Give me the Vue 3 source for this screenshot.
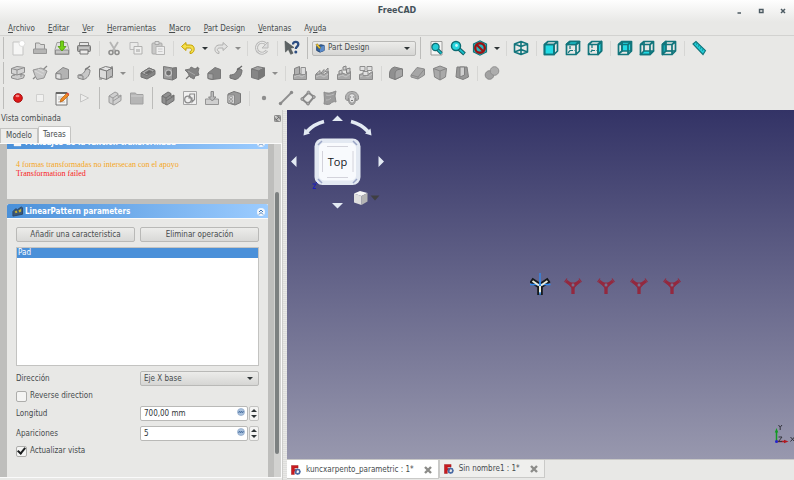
<script setup>
import { ref } from 'vue'

const menus = [
  ['', 'A', 'rchivo'],
  ['', 'E', 'ditar'],
  ['', 'V', 'er'],
  ['', 'H', 'erramientas'],
  ['', 'M', 'acro'],
  ['', 'P', 'art Design'],
  ['', 'V', 'entanas'],
  ['Ay', 'u', 'da']
]

const cube = (extra) =>
  `<g fill="none" stroke="#12757c" stroke-width="1.700" stroke-linejoin="round">${extra}<path d="M1.500 4.500h9.500v10H1.500zM1.500 4.500L5 1.500h9.500L11 4.500M14.500 1.500v9.500L11 14.500"/></g>`
const isoBox = (a, b, c, s = '#858585') =>
  `<g stroke="${s}" stroke-width="1" stroke-linejoin="round"><path fill="${a}" d="M1.500 4l6-2.500 7 1.500-6 3z"/><path fill="${b}" d="M1.500 4l7 2v8.500l-7-2z"/><path fill="${c}" d="M8.500 6l6-3v8l-6 3.500z"/></g>`
const ground = '<path d="M1.500 9.500l5-1.500L10 9.500l4.500-3v8h-13z" fill="#a9a9a9" stroke="#8a8a8a"/><path d="M2 12l4-2 4 2 4-3" fill="none" stroke="#c4c4c4"/>'

const icons = {
  new: '<path d="M3 2h7l3 3v10H3z" fill="#f6f6f5" stroke="#c4c4c3"/><circle cx="12" cy="3.500" r="3" fill="#fff" stroke="#dededd"/>',
  open: '<path d="M3.500 3h4l1 1.500h4V12h-9z" fill="#d8d8d7" stroke="#929291"/><path d="M1.500 9h13v4.500h-13z" fill="#b5b5b4" stroke="#979796"/>',
  save: '<path d="M3 2.500h10l2 7v5H1v-5z" fill="#e0e0df" stroke="#a0a09f"/><path d="M1.500 10h13v4h-13z" fill="#c5c5c4" stroke="#8c8c8b"/><path d="M6.500 1h3v5.500H12L8 11 4 6.500h2.500z" fill="#73d216" stroke="#4e9a06" stroke-width=".8"/>',
  print: '<path d="M3.500 2.500h9v5h-9z" fill="#e6e6e5" stroke="#858584"/><rect x="1.500" y="5.500" width="13" height="6" rx="1" fill="#a6a6a5" stroke="#777776"/><path d="M4 10h8v4H4z" fill="#ecebea" stroke="#777776"/><path d="M3 8h10" stroke="#e3e3e2"/>',
  cut: '<path d="M4 2l5.500 9M12 2L6.500 11" stroke="#b5b5b4" stroke-width="1.800"/><circle cx="5" cy="12.500" r="2" fill="none" stroke="#8e8e8d" stroke-width="1.600"/><circle cx="11" cy="12.500" r="2" fill="none" stroke="#8e8e8d" stroke-width="1.600"/>',
  copy: '<path d="M2 2.500h8v7H2z" fill="#eaeae9" stroke="#bababa"/><path d="M6 6.500h8v7.500H6z" fill="#efefee" stroke="#b0b0af"/><path d="M8 9h4v3H8z" fill="#c6c6c5"/>',
  paste: '<rect x="2" y="3" width="10" height="11" rx="1" fill="#c9c9c8" stroke="#a9a9a8"/><path d="M5 1.500h4v3H5z" fill="#ddd" stroke="#a9a9a8"/><path d="M6 6.500h8.500v8H6z" fill="#eee" stroke="#b5b5b4"/><path d="M8 9h4.500M8 11.500h4.500" stroke="#ccc"/>',
  undo: '<path d="M1.500 6.500L6 2.500v2.500h4.500c5 0 5 8.500-.5 8.500v-2c2.500-.5 2-3.500-.5-3.500H6v2.500z" fill="#f4df4c" stroke="#c4a000" stroke-linejoin="round"/>',
  redo: '<path d="M14.500 6.500L10 2.500v2.500H6.500c-6 0-6 8.500-.5 8.500v-2C3.500 11 4 8 6.500 8H10v2.500z" fill="#e2e2e1" stroke="#b0b0af" stroke-linejoin="round"/>',
  refresh: '<path d="M12.800 10.500A5.500 5.500 0 1 1 12 4" fill="none" stroke="#b9b9b8" stroke-width="3"/><path d="M12.800 10.500A5.500 5.500 0 1 1 12 4" fill="none" stroke="#eee" stroke-width="1"/><path d="M14 2v6H8z" fill="#ddd" stroke="#b9b9b8"/>',
  whats: '<path d="M1 1l9 6.500-3.500.7 2.500 5-2.300 1.100-2.400-5L1.500 12z" fill="#5d6364" stroke="#454b4c" stroke-width=".6"/><path d="M9 4.500C9 .8 14.500 1 14.300 4.400 14.200 6.500 11.800 6.800 11.800 9" fill="none" stroke="#2c4d82" stroke-width="2.300"/><circle cx="11.800" cy="12" r="1.500" fill="#2c4d82"/>',
  fitall: '<path d="M3 1.500h11v13.500H3z" fill="#f5f5f4" stroke="#9b9b9a"/><path d="M9.500 9.500l4 4" stroke="#0d5d63" stroke-width="3.200"/><path d="M9.500 9.500l4 4" stroke="#19bfc9" stroke-width="1.600"/><circle cx="7.500" cy="7" r="3.600" fill="#22ccd6" stroke="#0d6c73" stroke-width="1.200"/>',
  zoomsel: '<path d="M8.500 8.500l6 5.500" stroke="#0d5d63" stroke-width="3.800"/><path d="M8.500 8.500l5.500 5" stroke="#19bfc9" stroke-width="1.800"/><circle cx="6" cy="6" r="4.500" fill="#27d5df" stroke="#0d6c73" stroke-width="1.500"/><circle cx="6.500" cy="5.500" r="1.400" fill="#c8f8fa"/>',
  drawstyle: '<path d="M1.500 4L8 .800 14.500 4v8L8 15.200 1.500 12z" fill="#29b9c0" stroke="#12757c" stroke-width="1.200"/><circle cx="8" cy="8" r="4.800" fill="none" stroke="#9b1212" stroke-width="2.400"/><path d="M4.500 4.500l7 7" stroke="#9b1212" stroke-width="2.200"/>',
  iso: '<g fill="none" stroke="#12757c" stroke-width="1.600" stroke-linejoin="round"><path d="M1.500 4L8 1.500 14.500 4v8L8 14.500 1.500 12zM1.500 4L8 6.500 14.500 4M8 6.500v8M8 1.500v4M1.500 12L8 9.500l6.500 2.500"/></g>',
  front: cube('<path d="M1.500 4.500h9.500v10H1.500z" fill="#22dbe5"/>'),
  top: cube('<path d="M1.500 4.500L5 1.500h9.500L11 4.500z" fill="#22dbe5"/><path d="M5 6v4.500L2 14M5 10.500h5" stroke-width="1.200" stroke-dasharray="3 1.500"/>'),
  right: cube('<path d="M11 4.500l3.500-3v9.500L11 14.500z" fill="#22dbe5"/><path d="M5 5v5.500L2 14M5 10.500h5" stroke-width="1.200" stroke-dasharray="3 1.500"/>'),
  rear: cube('<path d="M5 2h9v9H5z" fill="#22dbe5"/><path d="M5 2v9l-3.500 3"/>'),
  bottom: cube('<path d="M1.500 14.500L5 11h9.500L11 14.500z" fill="#22dbe5"/><path d="M5 2v9"/>'),
  left: cube('<path d="M1.500 4.500L5 1.500V11l-3.500 3.500z" fill="#14a9b2"/><path d="M5 11h9"/>'),
  measure: '<path d="M2 4l3-2.500 9.500 9L12 14.500z" fill="#22cdd7" stroke="#12757c" stroke-width="1.100"/><path d="M5 4.500l1.300-1.200M7 6.500l1.300-1.200M9 8.500l1.300-1.200M11 10.500l1.300-1.200" stroke="#12757c"/>',
  pad: '<g stroke="#8d8d8d" fill="#ccc" stroke-linejoin="round"><path d="M1.500 11l5.500-2 7.500 1-1 3-6 1.500-6-1.500z"/><path d="M1.500 3.500l5.500-2 7.500 1v5L7 10l-5.500-1.500z" fill="#d4d4d4"/><path d="M1.500 3.500l5.500 1.500 7.500-2.500M7 5v5M4 9v2M11 9v3"/></g>',
  revolve: '<path d="M1 14L15 1" stroke="#888" stroke-width="1.200"/><path d="M1 5l8-2 6 3-3 7-7 1.500-2-4z" fill="#c5c5c5" stroke="#949494"/><path d="M3 6l8 4M6 4l6 3" stroke="#dadada"/>',
  loft: '<path d="M2 8l7-5.500 5.500 2v9l-8.500 1-4-1z" fill="#b3b3b3" stroke="#858585"/><path d="M2 8.500l5 .5v5.500l-5-1z" fill="#e2e2e2" stroke="#858585"/>',
  sweep: '<path d="M2 10c5 0 7-3 8-7l4 2c0 5-3 9-7 9.500L2 13z" fill="#c7c7c7" stroke="#858585"/><path d="M9 5l5-4" stroke="#777" stroke-width="1.300"/><path d="M3 10l4 1v3" fill="none" stroke="#858585"/>',
  prim: isoBox('#e4e4e4', '#dadada', '#b9b9b9', '#7c7c7c') + '<path d="M14 1v2M1 14h3M12 12h3" stroke="#777"/>',
  pocket: '<g stroke="#707070" stroke-linejoin="round"><path d="M1 8l8-5 6 2.500v4L7 14l-6-2z" fill="#858585"/><path d="M1 8l8-5 6 2.500-8 5z" fill="#a9a9a9"/><path d="M5 8l4-2.500 3 1L8 9z" fill="#666"/></g>',
  hole: '<path d="M1.500 1.500l9 1.500v12l-9-1.500z" fill="#9c9c9c" stroke="#777"/><path d="M10.500 3l4-.500v10.500l-4 2z" fill="#808080" stroke="#777"/><circle cx="6.500" cy="8" r="3" fill="#6e6e6e" stroke="#c6c6c6" stroke-width="1.200"/>',
  groove: '<path d="M2 14L14 2" stroke="#777" stroke-width="1.300"/><path d="M1 5l5-1 1-2 4 2 4-1-1 4 1 3-4 1-1 3-4-2-2-4z" fill="#848484" stroke="#777"/><path d="M4 6l7 4" stroke="#a5a5a5"/>',
  subloft: '<path d="M2 8l7-5.500 5.500 2v9l-8.500 1-4-1z" fill="#858585" stroke="#787878"/><path d="M2 8.500l5 .5v5.500l-5-1z" fill="#a5a5a5" stroke="#787878"/>',
  subsweep: '<path d="M2 10c5 0 7-3 8-7l4 2c0 5-3 9-7 9.500L2 13z" fill="#878787" stroke="#707070"/><path d="M9 5l5-4" stroke="#666" stroke-width="1.300"/>',
  subprim: isoBox('#a2a2a2', '#868686', '#777777', '#777'),
  mirror: ground + '<path d="M2.500 3.500l5-2V9l-5 1z" fill="#b0b0b0" stroke="#808080"/><path d="M9 2.500h4.500v7H9z" fill="#dcdcdc" stroke="#909090"/>',
  linpat: ground + '<path d="M2 9l4-3.500V9zM7 8l3-3.500V8zM11 6.500l3-3.500v4z" fill="#d5d5d5" stroke="#858585"/>',
  polpat: ground + '<path d="M3 9V6l3-1v4zM7 5V2l3-1v4zM10.500 8V4l3.500-1v5z" fill="#cfcfcf" stroke="#848484"/>',
  multi: ground + '<path d="M2 1.500h5v4H2zM9 1.500h5v4H9zM5 6.500h5v4H5z" fill="#e0e0e0" stroke="#8f8f8f"/>',
  fillet: '<g stroke="#7d7d7d" stroke-linejoin="round"><path d="M1.500 9c0-4 2-6 5-7l8 2v7L7 14.500l-5.500-2z" fill="#909090"/><path d="M7 9c0-3 2-5 7.500-5v7L7 14.500z" fill="#a6a6a6"/></g>',
  chamfer: '<g stroke="#8b8b8b" stroke-linejoin="round"><path d="M1 10l6-7.500 7.500 1.500v6L8 14l-7-2z" fill="#a6a6a6"/><path d="M1 10l7 2 6.500-8M8 12v2" fill="none"/></g>',
  draft: '<g stroke="#848484" stroke-linejoin="round"><path d="M1.500 3.500L8 1l6.500 2.500-1 8.500L8 15 2.500 12z" fill="#a9a9a9"/><path d="M1.500 3.500L8 6l6.500-2.500M8 6v9" fill="none"/></g>',
  thick: '<path d="M3 2h10l1.500 10L9 14.500 2 12z" fill="#999" stroke="#808080"/><path d="M6 2h4.500v8L6 12z" fill="#d0d0d0" stroke="#808080"/>',
  bool: '<circle cx="5.500" cy="10" r="4.300" fill="#a2a2a2" stroke="#898989"/><circle cx="10.500" cy="6" r="4.300" fill="#adadad" stroke="#909090"/>',
  rec: '<circle cx="8" cy="8" r="4.300" fill="#df1818" stroke="#a81010"/><ellipse cx="7.500" cy="6" rx="2" ry="1.200" fill="#f48080"/>',
  stop: '<path d="M4.500 4.500h7v7h-7z" fill="#f1f1f0" stroke="#d0d0cf"/>',
  macro: '<path d="M2 2.500h11V15H2z" fill="#f5f5f4" stroke="#737372"/><path d="M2 3h11" stroke="#666" stroke-width="2"/><path d="M4 7h6M4 9h4M4 12h7" stroke="#bbb"/><path d="M6 12l1-3 6-6 2 2-6 6z" fill="#f08a24" stroke="#b35c10" stroke-width=".7"/><path d="M12.500 3.500l1.200-1 1.600 1.600-1 1.200z" fill="#dd4444"/>',
  play: '<path d="M4.500 4l8 4-8 4z" fill="#ededec" stroke="#c6c6c5"/>',
  body: '<g stroke="#9a9a9a" fill="#cfcfcf" stroke-linejoin="round"><path d="M2 6l6-4 3 1.500v3l3-1.500v5.500L7 15l-5-2.500z"/><path d="M2 6l4 2 5-3.500M6 8v3l8-5M6 11v4" fill="none"/></g>',
  group: '<path d="M1.500 3h5l1 1.500h6.500V14h-12.500z" fill="#b5b5b5" stroke="#a0a0a0"/><path d="M2 6h12" stroke="#d0d0d0"/>',
  body2: '<g stroke="#6f6f6f" fill="#909090" stroke-linejoin="round"><path d="M2 6l6-4 3 1.500v3l3-1.500v5.500L7 15l-5-2.500z"/><path d="M2 6l4 2 5-3.500M6 8v3l8-5M6 11v4" fill="none"/></g>',
  sketch: '<path d="M1.500 1.500h13v13h-13z" fill="#f0f0f0" stroke="#a5a5a5"/><circle cx="6" cy="9.500" r="3.300" fill="none" stroke="#8b8b8b" stroke-width="1.300"/><path d="M8 4h4.500v5.500L10 12V8H7z" fill="none" stroke="#8b8b8b" stroke-width="1.200"/>',
  import: '<path d="M1.500 9h13v5.500h-13z" fill="#cfcfcf" stroke="#949494"/><path d="M7 1.500h2.500V7H12l-3.700 4L4.500 7H7z" fill="#bbb" stroke="#8a8a8a"/>',
  binder: '<path d="M2 4l6-2.500 6.500 2v9L9 15l-7-2z" fill="#999" stroke="#777"/><path d="M2 5h6.500v9L2 13z" fill="#d5d5d5" stroke="#888"/><circle cx="5" cy="7.500" r="1.500" fill="none" stroke="#999"/><circle cx="5" cy="11" r="1.500" fill="none" stroke="#999"/>',
  point: '<circle cx="8" cy="8" r="2.200" fill="#8e8e8e"/>',
  line: '<path d="M2.500 13.500l11-11" stroke="#8f8f8f" stroke-width="1.800"/><circle cx="2.500" cy="13.500" r="1.700" fill="#8a8a8a"/><circle cx="13.500" cy="2.500" r="1.700" fill="#8a8a8a"/>',
  plane: '<path d="M2 9l6.500-6.500L14 7l-6 7z" fill="none" stroke="#8a8a8a" stroke-width="2"/><g fill="#aaa" stroke="#777" stroke-width=".6"><circle cx="2.300" cy="9" r="1.500"/><circle cx="8.500" cy="2.500" r="1.500"/><circle cx="13.800" cy="7" r="1.500"/><circle cx="8" cy="13.500" r="1.500"/></g>',
  lcs: '<path d="M2 2c4 2 7 1 12-1l-1 5 1 6c-2-1-4 0-6 2-2 1-4 0-6 0 1-4 0-8 0-12z" fill="#9c9c9c" stroke="#8c8c8c"/><path d="M4 5c3 1 5 0 8-1M4 10c2 0 3 0 5-2" fill="none" stroke="#bbb"/>',
  shape: '<path d="M1.500 9C1 4 4 1.500 8 1.500S15 4 14.500 9l-2 2-1-3c0 5-1 6.500-3.500 6.500S4.500 13 4.500 8l-1 3z" fill="#b3b3b3" stroke="#8f8f8f"/><path d="M5 6c0-3 6-3 6 0 0 5-1 7-3 7s-3-2-3-7z" fill="#e3e3e3" stroke="#8f8f8f"/><path d="M6.500 6.500v1M9.500 6.500v1M7 10.500h2" stroke="#777" stroke-width="1.200"/>'
}

const item = (icon, label, disabled = true) => ({ icon, label, disabled })
const arrow = (disabled = true) => ({ arrow: true, disabled, label: 'Más opciones' })
const sep = { sep: true }
const bar = { bar: true }

const rows = [
  {
    name: 'main',
    items: [
      item('new', 'Nuevo'), item('open', 'Abrir'), item('save', 'Guardar', false), item('print', 'Imprimir', false), sep,
      item('cut', 'Cortar'), item('copy', 'Copiar'), item('paste', 'Pegar'), sep,
      item('undo', 'Deshacer', false), arrow(false), item('redo', 'Rehacer'), arrow(), sep,
      item('refresh', 'Actualizar'), sep, item('whats', '¿Qué es esto?', false), bar,
      { workbench: true }, bar,
      item('fitall', 'Ajustar todo', false), item('zoomsel', 'Ajustar selección', false), item('drawstyle', 'Estilo de dibujo', false), arrow(false), sep,
      item('iso', 'Isométrica', false), sep,
      item('front', 'Frontal', false), item('top', 'Planta', false), item('right', 'Derecha', false), sep,
      item('rear', 'Posterior', false), item('bottom', 'Inferior', false), item('left', 'Izquierda', false), sep,
      item('measure', 'Medir', false)
    ]
  },
  {
    name: 'features',
    items: [
      item('pad', 'Pad'), item('revolve', 'Revolución'), item('loft', 'Loft'), item('sweep', 'Barrido'), item('prim', 'Primitiva'), arrow(), sep,
      item('pocket', 'Vaciado'), item('hole', 'Agujero'), item('groove', 'Ranura'), item('subloft', 'Loft sustractivo'), item('subsweep', 'Barrido sustractivo'), item('subprim', 'Primitiva sustractiva'), arrow(), sep,
      item('mirror', 'Simetría'), item('linpat', 'Patrón lineal'), item('polpat', 'Patrón polar'), item('multi', 'Multitransformación'), sep,
      item('fillet', 'Redondeo'), item('chamfer', 'Chaflán'), item('draft', 'Inclinación'), item('thick', 'Espesor'), sep,
      item('bool', 'Booleana')
    ]
  },
  {
    name: 'macro',
    items: [
      item('rec', 'Grabar', false), item('stop', 'Detener'), item('macro', 'Macros', false), item('play', 'Ejecutar'), bar,
      item('body', 'Pieza'), item('group', 'Grupo'), bar,
      item('body2', 'Cuerpo'), item('sketch', 'Croquis'), item('import', 'Asignar croquis'), item('binder', 'Forma enlazada'), sep,
      item('point', 'Punto'), item('line', 'Línea'), item('plane', 'Plano'), item('lcs', 'Sistema local'), item('shape', 'Clon')
    ]
  }
]

const direction = ref('Eje X base')
const reverse = ref(false)
const length = ref('700,00 mm')
const occurrences = ref('5')
const update = ref(true)
const copies = [43, 76, 109, 142]
const documents = [
  { title: 'kuncxarpento_parametric : 1*', active: true },
  { title: 'Sin nombre1 : 1*', active: false }
]
</script>

<template>
  <div class="window">
    <header class="titlebar">
      <h1>FreeCAD</h1>
      <div class="controls">
        <button aria-label="Minimizar"><svg viewBox="0 0 8 8"><path d="M2.500 6h3.500" stroke="#4c5a62" stroke-width="1.500" /></svg></button>
        <button aria-label="Maximizar"><svg viewBox="0 0 8 8"><path d="M2.500 2.500h3.500v3H2.500z" fill="none" stroke="#4c5a62" stroke-width="1.400" /></svg></button>
        <button aria-label="Cerrar"><svg viewBox="0 0 8 8"><path d="M2 2l4 4M6 2L2 6" stroke="#4c5a62" stroke-width="1.500" /></svg></button>
      </div>
    </header>

    <nav class="menubar">
      <button v-for="m in menus" :key="m.join('')">{{ m[0] }}<u>{{ m[1] }}</u>{{ m[2] }}</button>
    </nav>

    <div class="toolbars">
      <div v-for="row in rows" :key="row.name" class="toolbar" :class="row.name">
        <template v-for="(it, i) in row.items" :key="i">
          <i v-if="it.sep" class="sep"></i>
          <i v-else-if="it.bar" class="sep strong"></i>
          <div v-else-if="it.workbench" class="combo workbench">
            <svg viewBox="0 0 12 12"><path d="M2 4l5-2 4 1v6l-5 2-4-2z" fill="#3465a4" stroke="#1d3c68" /><path d="M6 5l5-2v6l-5 2z" fill="#5b8bca" /><path d="M1 2l2-1 4 5-2 1z" fill="#f0c93a" stroke="#7c6410" stroke-width=".6" /></svg>
            <select aria-label="Entorno de trabajo"><option>Part Design</option></select>
          </div>
          <button v-else-if="it.arrow" class="arrow" :class="{ off: it.disabled }" :aria-label="it.label"></button>
          <button v-else class="tool" :aria-label="it.label" :disabled="it.disabled">
            <svg viewBox="0 0 16 16" fill="none" v-html="icons[it.icon]"></svg>
          </button>
        </template>
      </div>
    </div>

    <main class="work">
      <aside class="dock">
        <div class="dock-title">
          <span>Vista combinada</span>
          <button aria-label="Desacoplar"><svg viewBox="0 0 8 8"><rect x=".5" y=".5" width="7" height="7" rx="1" fill="#d5d5d4" stroke="#777" /><path d="M2 6l4-4M3 2h3v3M2 3v3h3" stroke="#666" fill="none" /></svg></button>
        </div>
        <div class="dock-tabs">
          <button>Modelo</button>
          <button class="active">Tareas</button>
        </div>
        <div class="scroll">
          <div class="tasks">
            <section class="box">
              <div class="box-head">
                <svg class="box-icon" viewBox="0 0 12 12"><path d="M2 2h8v8H2z" fill="#f4f4f4" /></svg>
                <h2>Mensajes de la función transformada</h2>
                <button class="fold" aria-label="Plegar"><svg viewBox="0 0 8 8"><path d="M2 4l2-2 2 2M2 6.500l2-2 2 2" fill="none" stroke="#3d77b8" /></svg></button>
              </div>
              <div class="messages">
                <p class="warn">4 formas transformadas no intersecan con el apoyo</p>
                <p class="error">Transformation failed</p>
              </div>
            </section>
            <section class="box grow">
              <div class="box-head">
                <svg class="box-icon" viewBox="0 0 12 12"><path d="M1 6l3-3 2 1 4-3 1.500 1v7L1 11z" fill="#3c5878" stroke="#2d4560" /><path d="M3 6l2-1 1 2-2 1zM7 5l3-2v3l-2 1z" fill="#c9b22e" /></svg>
                <h2>LinearPattern parameters</h2>
                <button class="fold" aria-label="Plegar"><svg viewBox="0 0 8 8"><path d="M2 4l2-2 2 2M2 6.500l2-2 2 2" fill="none" stroke="#3d77b8" /></svg></button>
              </div>
              <form class="params" @submit.prevent>
                <div class="pair">
                  <button type="button" class="push">Añadir una caracteristica</button>
                  <button type="button" class="push">Eliminar operación</button>
                </div>
                <ul class="list" role="listbox" aria-label="Operaciones">
                  <li role="option" aria-selected="true">Pad</li>
                </ul>
                <div class="pair">
                  <label for="direction">Dirección</label>
                  <div class="combo">
                    <select id="direction" v-model="direction"><option>Eje X base</option></select>
                  </div>
                </div>
                <label class="check"><input v-model="reverse" type="checkbox" />Reverse direction</label>
                <div class="pair">
                  <label for="length">Longitud</label>
                  <div class="spin">
                    <input id="length" v-model="length" type="text" />
                    <svg class="fx" viewBox="0 0 8 8"><circle cx="4" cy="4" r="3.500" fill="#a9c1dd" stroke="#8fa9c8" stroke-width=".7" /><path d="M1.500 5l1-2 1 2 1-2 1 2 1-2" fill="none" stroke="#41699a" stroke-width=".8" /></svg>
                    <div class="steps"><button type="button" aria-label="Más"></button><button type="button" class="down" aria-label="Menos"></button></div>
                  </div>
                </div>
                <div class="pair">
                  <label for="occurrences">Apariciones</label>
                  <div class="spin">
                    <input id="occurrences" v-model="occurrences" type="text" />
                    <svg class="fx" viewBox="0 0 8 8"><circle cx="4" cy="4" r="3.500" fill="#a9c1dd" stroke="#8fa9c8" stroke-width=".7" /><path d="M1.500 5l1-2 1 2 1-2 1 2 1-2" fill="none" stroke="#41699a" stroke-width=".8" /></svg>
                    <div class="steps"><button type="button" aria-label="Más"></button><button type="button" class="down" aria-label="Menos"></button></div>
                  </div>
                </div>
                <label class="check"><input v-model="update" type="checkbox" />Actualizar vista</label>
              </form>
            </section>
          </div>
          <div class="track"><i></i><b></b><i class="rest"></i></div>
        </div>
      </aside>
      <div class="splitter"></div>

      <section class="mdi">
        <div class="view">
          <svg class="navcube" viewBox="0 0 104 104">
            <g fill="#e3eaf3">
              <path d="M50.500 5.500l5.500 5.500h-11zM50.500 98.500l5.500-5.500h-11zM4 51.500l5.500-5.500v11zM97 51.500l-5.500-5.500v11z" />
              <path d="M16.500 25.500l1-7 5.500 5zM84.500 25.500l-1-7-5.500 5z" />
            </g>
            <path d="M37 11.500Q27 14 20 21.500M64 11.500Q74 14 81 21.500" fill="none" stroke="#e3eaf3" stroke-width="3.500" />
            <rect x="27.500" y="28.500" width="46" height="46.500" rx="8" fill="#e3e9f2" />
            <path d="M31 35l4-4M66 31l4 4M31 69l4 4M66 73l4-4" stroke="#9aa5c6" stroke-width="1.500" />
            <rect x="32" y="33" width="37" height="37.500" rx="5" fill="#f8fafd" />
            <path d="M40 36.500h21M40 67.500h21M35.500 41v21M66 41v21" stroke="#c9c9d2" stroke-width=".8" />
            <text x="50.500" y="56" text-anchor="middle">Top</text>
            <path d="M25.500 74h3.500l-3 4.500h3M29 72l1.500 1.500" stroke="#1b1bc0" fill="none" />
            <path d="M67 83.500l6-2.500 7.500 2-6 3z" fill="#f6f6f6" />
            <path d="M67 83.500l7.500 2.500v9L67 92.500z" fill="#dedede" />
            <path d="M74.500 86l6-3v8.500l-6 3.500z" fill="#b4b4b4" />
            <path d="M83.500 85.500h9l-4.500 5z" fill="#3f3f42" />
          </svg>

          <svg class="pattern" viewBox="0 0 160 28">
            <defs>
              <g id="fork">
                <path d="M-7-4L0 1M7-4L0 1M0 1v8" stroke-width="3.300" fill="none" />
                <path d="M-8.500-3l2.500-3.500M8.500-3L6-6.500M-5-2h10L0 4z" stroke-width="1.100" fill="none" />
              </g>
            </defs>
            <g transform="translate(10 14)" fill="none">
              <path d="M-9-5L0 1M9-5L0 1M0 0v10" stroke="#16191c" stroke-width="5.600" />
              <path d="M0-12V8M-10.500-.500h21" stroke="#2f8bf2" stroke-width="1.300" />
              <path d="M-7.500-4L-1 .500M7.500-4L1 .500M0 1v7.500" stroke="#e9ebdc" stroke-width="2" />
              <path d="M0-5v6M0 7v3" stroke="#2f8bf2" stroke-width="1.300" />
            </g>
            <g v-for="x in copies" :key="x" :transform="`translate(${x} 14)`" stroke="#93293f">
              <use href="#fork" />
              <circle r="1.500" fill="#77718f" stroke="none" />
            </g>
          </svg>

          <svg class="axes" viewBox="0 0 24 36">
            <path d="M6.500 18.500V8" stroke="#129a22" stroke-width="1.500" /><path d="M4.800 9.500L6.500 5l1.700 4.500z" fill="#129a22" />
            <path d="M7 18.500h8" stroke="#b01a22" stroke-width="1.500" /><path d="M14 16.800l4.500 1.700-4.500 1.700z" fill="#b01a22" />
            <circle cx="6.500" cy="18.500" r="1.500" fill="#2222d0" />
            <path d="M8.500 2l1.700 2.200L12 2M10.200 4.200V7M8.500 14h3.500l-3.500 4.500h3.500M20.500 14l4 4.500M24.500 14l-4 4.500" fill="none" stroke="#33333c" />
          </svg>
        </div>
        <div class="doc-tabs">
          <div v-for="d in documents" :key="d.title" class="doc" :class="{ active: d.active }">
            <svg class="logo" viewBox="0 0 12 12"><path d="M.500 .500h8V3.500H4V5h3v2.500H4V11.500H.500z" fill="#cb1b20" stroke="#8f0e12" stroke-width=".5" /><circle cx="8" cy="8" r="2.500" fill="none" stroke="#4b6ca5" stroke-width="1.800" /><path d="M8 4.300v1.500M8 10.200v1.500M4.300 8h1.500M10.200 8h1.500M5.400 5.400l1 1M9.600 9.600l1 1M10.600 5.400l-1 1M5.400 10.600l1-1" stroke="#4b6ca5" stroke-width="1.300" /></svg>
            <button class="doc-name">{{ d.title }}</button>
            <button class="close" aria-label="Cerrar documento"><svg viewBox="0 0 8 8"><path d="M1 1l6 6M7 1L1 7" stroke="#8c8c89" stroke-width="2.400" /></svg></button>
          </div>
        </div>
      </section>
    </main>
  </div>
</template>

<style>
body {
  margin: 0;
  background: #e8e8e6;
}
</style>

<style scoped>
* {
  box-sizing: border-box;
}
.window {
  display: flex;
  flex-direction: column;
  height: 100vh;
  background: #e8e8e6;
  color: #464b4d;
  font: 8px/10px "DejaVu Sans Condensed", "DejaVu Sans", sans-serif;
  overflow: hidden;
}
button,
input,
select {
  font: inherit;
  color: inherit;
  border: 0;
  margin: 0;
  padding: 0;
  background: none;
}
svg {
  display: block;
}
.titlebar {
  position: relative;
  display: flex;
  align-items: center;
  justify-content: center;
  height: 22px;
  background: linear-gradient(#fefefe, #e8e8e6);
}
h1 {
  margin: 0;
  font: bold 8px/10px "DejaVu Sans", sans-serif;
  color: #45525a;
}
.controls {
  position: absolute;
  right: 7px;
  top: 7px;
  display: flex;
  gap: 14px;
}
.controls button,
.controls svg {
  width: 8px;
  height: 8px;
}
.menubar {
  display: flex;
  align-items: flex-end;
  gap: 13px;
  height: 14px;
  padding: 0 8px 1px;
  border-bottom: 1px solid #d2d2d0;
}
.menubar u {
  text-underline-offset: 1px;
}
.toolbar {
  display: flex;
  align-items: center;
  height: 25px;
  padding: 0 0 1px 3px;
}
.toolbars {
  height: 74px;
}
.toolbar::before {
  content: "";
  width: 1px;
  height: 22px;
  margin-right: 3px;
  background: #bcbcba;
}
.tool {
  display: grid;
  place-items: center;
  flex: none;
  width: 22px;
  height: 22px;
}
.tool svg {
  width: 16px;
  height: 16px;
}
.sep {
  flex: none;
  width: 8px;
  height: 15px;
  background: linear-gradient(#d6d6d4, #d6d6d4) center / 1px 100% no-repeat;
}
.sep.strong {
  width: 9px;
  height: 22px;
  background-image: linear-gradient(#bcbcba, #bcbcba);
}
.arrow {
  display: grid;
  place-items: center;
  flex: none;
  width: 11px;
  height: 22px;
}
.features .arrow {
  width: 12px;
}
.arrow::before {
  content: "";
  border: 3px solid transparent;
  border-top-color: #2e3436;
  border-bottom: 0;
}
.arrow.off::before {
  border-top-color: #8d8d8c;
}
.combo {
  display: flex;
  align-items: center;
  position: relative;
  height: 15px;
  border: 1px solid #b9b9b7;
  border-radius: 2px;
  background: linear-gradient(#ececea, #d6d6d4);
}
.combo select {
  appearance: none;
  flex: 1;
  min-width: 0;
  height: 13px;
  padding: 0 14px 0 3px;
}
.combo::after {
  content: "";
  position: absolute;
  right: 5px;
  top: 5px;
  border: 3px solid transparent;
  border-top-color: #2e3436;
  border-bottom: 0;
  pointer-events: none;
}
.workbench {
  width: 104px;
  padding-left: 2px;
}
.workbench svg {
  width: 10px;
  height: 10px;
}
.work {
  display: flex;
  flex: 1;
  min-height: 0;
}
.dock {
  display: flex;
  flex-direction: column;
  flex: 0 0 282px;
  min-height: 0;
  padding-bottom: 2px;
}
.dock-title {
  display: flex;
  align-items: center;
  justify-content: space-between;
  height: 16px;
  padding: 1px 1px 0;
}
.dock-title svg {
  width: 7px;
  height: 7px;
}
.dock-tabs {
  display: flex;
  align-items: flex-end;
  height: 17px;
}
.dock-tabs button {
  height: 15px;
  padding: 0 5px;
  border: 1px solid #c4c4c2;
  border-bottom: 0;
  background: #ededeb;
}
.dock-tabs .active {
  height: 17px;
  padding: 0 4px;
  border-radius: 2px 2px 0 0;
  background: #fdfdfd;
}
.scroll {
  display: flex;
  flex: 1;
  min-height: 0;
  overflow: hidden;
  border: solid #fafafa;
  border-width: 1px 1px 1px 0;
  background: #bebebc;
}
.tasks {
  display: flex;
  flex-direction: column;
  flex: 1;
  gap: 5px;
  margin-top: -9px;
  padding: 0 6px 0 7px;
}
.box {
  background: #e8e8e6;
}
.box.grow {
  flex: 1;
}
.box-head {
  display: flex;
  align-items: center;
  height: 14px;
  padding: 1px 3px 0 5px;
  border-radius: 2px 2px 0 0;
  background: linear-gradient(90deg, #4a90d9, #9cccff);
}
.box-icon {
  width: 11px;
  height: 11px;
  margin-right: 2px;
}
h2 {
  flex: 1;
  margin: 0;
  font-size: 8px;
  line-height: 10px;
  color: #fff;
}
.fold {
  width: 8px;
  height: 8px;
  border-radius: 50%;
  background: #f2f6fb;
}
.messages {
  height: 50px;
  padding: 11px 9px;
  font: 8px/9px "Liberation Serif", serif;
}
.messages p {
  margin: 0;
}
.warn {
  color: #f5a623;
}
.error {
  color: #f8201c;
}
.params {
  display: flex;
  flex-direction: column;
  padding: 8px 9px;
  gap: 5px;
  border-top: 1px solid #fafafa;
}
.pair {
  display: grid;
  grid-template-columns: 1fr 1fr;
  gap: 5px;
  align-items: center;
}
.push {
  height: 15px;
  border: 1px solid #b9b9b7;
  border-radius: 2px;
  background: linear-gradient(#ececea, #d9d9d7);
}
.list {
  height: 119px;
  margin: 0;
  padding: 0;
  border: 1px solid #c3c3c1;
  background: #fff;
  list-style: none;
}
.list li {
  padding: 0 1px;
  background: #4a90d9;
  color: #fff;
}
.check {
  display: flex;
  align-items: center;
  gap: 3px;
  height: 10px;
}
.check input {
  appearance: none;
  display: grid;
  place-items: center;
  width: 11px;
  height: 11px;
  border: 1px solid #adadab;
  border-radius: 2px;
  background: #f4f4f3;
}
.check input:checked::before {
  content: "";
  width: 3px;
  height: 6px;
  margin-top: -2px;
  border: solid #1c1f20;
  border-width: 0 2px 2px 0;
  rotate: 40deg;
}
.spin {
  display: grid;
  grid-template-columns: 1fr 10px;
  gap: 1px;
  position: relative;
}
.spin input {
  min-width: 0;
  height: 15px;
  padding: 0 14px 0 3px;
  border: 1px solid #b9b9b7;
  border-radius: 2px;
  background: #fff;
  color: #2e3436;
}
.fx {
  position: absolute;
  right: 14px;
  top: 2px;
  width: 8px;
  height: 8px;
}
.steps {
  display: grid;
  grid-template-rows: 1fr 1fr;
  border: 1px solid #c3c3c1;
  border-radius: 2px;
  background: #f3f3f2;
}
.steps button {
  display: grid;
  place-items: center;
}
.steps button::before {
  content: "";
  border: 3px solid transparent;
  border-top: 0;
  border-bottom-color: #2e3436;
}
.steps .down::before {
  border: 3px solid transparent;
  border-bottom: 0;
  border-top-color: #2e3436;
}
.track {
  display: flex;
  flex-direction: column;
  width: 7px;
  padding-left: 1px;
  background: #d2d2d0;
}
.track i {
  flex: 48;
}
.track b {
  flex: 261;
  width: 4px;
  border-radius: 2px;
  background: #7c8080;
}
.track .rest {
  flex: 23;
}
.splitter {
  flex: 0 0 5px;
  border-left: 1px solid #cdcdcb;
  background: repeating-linear-gradient(#e8e8e6 0 1px, #dededc 1px 2px);
}
.mdi {
  display: flex;
  flex-direction: column;
  flex: 1;
  min-width: 0;
}
.view {
  position: relative;
  flex: 1;
  overflow: hidden;
  background: linear-gradient(#333366, #9898ae);
}
.navcube {
  position: absolute;
  left: 0;
  top: 0;
  width: 104px;
  height: 104px;
}
.navcube text {
  font: 11px "Open Sans", "Noto Sans", sans-serif;
  fill: #15171c;
}
.pattern {
  position: absolute;
  left: 243px;
  top: 161px;
  width: 160px;
  height: 28px;
}
.axes {
  position: absolute;
  right: 0;
  bottom: 0;
  width: 24px;
  height: 36px;
}
.doc-tabs {
  display: flex;
  align-items: flex-start;
  height: 21px;
  border-top: 1px solid #c9c9c7;
}
.doc {
  display: flex;
  align-items: center;
  height: 18px;
  padding: 1px 6px 0 4px;
  border: 1px solid #cacac8;
  border-top: 0;
  background: #efefed;
}
.doc.active {
  height: 19px;
  border-left: 0;
  background: #fff;
}
.logo {
  width: 10px;
  height: 10px;
  margin-right: 5px;
}
.close {
  margin-left: 10px;
}
.close svg {
  width: 8px;
  height: 8px;
}
</style>
